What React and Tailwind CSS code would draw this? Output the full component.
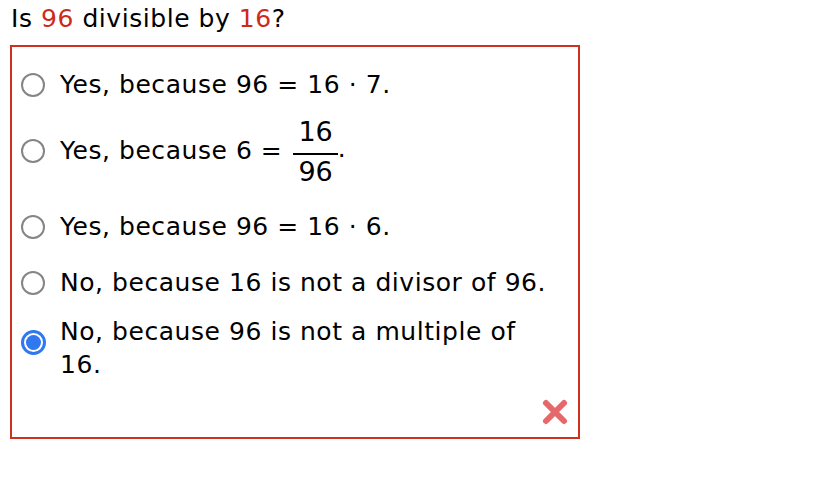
export default function App() {
  const options = [
    { id: 1, text: "Yes, because 96 = 16 · 7." },
    { id: 2, fraction: true },
    { id: 3, text: "Yes, because 96 = 16 · 6." },
    { id: 4, text: "No, because 16 is not a divisor of 96." },
  ];

  return (
    <div className="w-[834px] h-[496px] bg-white text-black font-['DejaVu_Sans',Verdana,sans-serif] text-[25px] tracking-[0.55px]">
      <div className="pl-[11px] pt-[4px] h-[45px] leading-[30px]">
        Is <span className="text-[#cc2a1b]">96</span> divisible by{" "}
        <span className="text-[#cc2a1b]">16</span>?
      </div>
      <div className="ml-[10px] w-[570px] h-[394px] border-2 border-[#d0311f] flex flex-col pt-[10px]">
        {options.map((o) =>
          o.fraction ? (
            <div key={o.id} className="h-[86px] pb-[10px] flex items-center">
              <Radio />
              <span>Yes, because 6 =</span>
              <span className="inline-flex flex-col items-center ml-[11px] mt-[2px] leading-[28px] text-[27px] tracking-normal">
                <span className="px-[5px]">16</span>
                <span className="w-full h-[2px] bg-black mt-[7px] mb-[3px]" />
                <span className="px-[5px]">96</span>
              </span>
              <span className="-mt-[4px]">.</span>
            </div>
          ) : (
            <div key={o.id} className="h-[56px] flex items-center">
              <Radio />
              <span>{o.text}</span>
            </div>
          )
        )}
        <div className="flex items-start pt-[4px] leading-[33px]">
          <Radio checked />
          <span className="w-[470px]">No, because 96 is not a multiple of 16.</span>
        </div>
        <div className="flex justify-end pr-[9px] mt-auto mb-[11px]">
          <svg width="28" height="28" viewBox="0 0 28 28">
            <path d="M5 5 L23 23 M23 5 L5 23" stroke="#e3595b" strokeWidth="6" strokeLinecap="round" opacity="0.9" />
          </svg>
        </div>
      </div>
    </div>
  );
}

function Radio({ checked }) {
  return (
    <span className="w-[48px] pl-[9px] flex shrink-0">
      {checked ? (
        <span className="w-[25px] h-[25px] rounded-full border-[3px] border-[#2f78f0] flex items-center justify-center mt-[15px]">
          <span className="w-[15px] h-[15px] rounded-full bg-[#2f78f0]" />
        </span>
      ) : (
        <span className="w-[24px] h-[24px] rounded-full border-2 border-[#858585]" />
      )}
    </span>
  );
}
